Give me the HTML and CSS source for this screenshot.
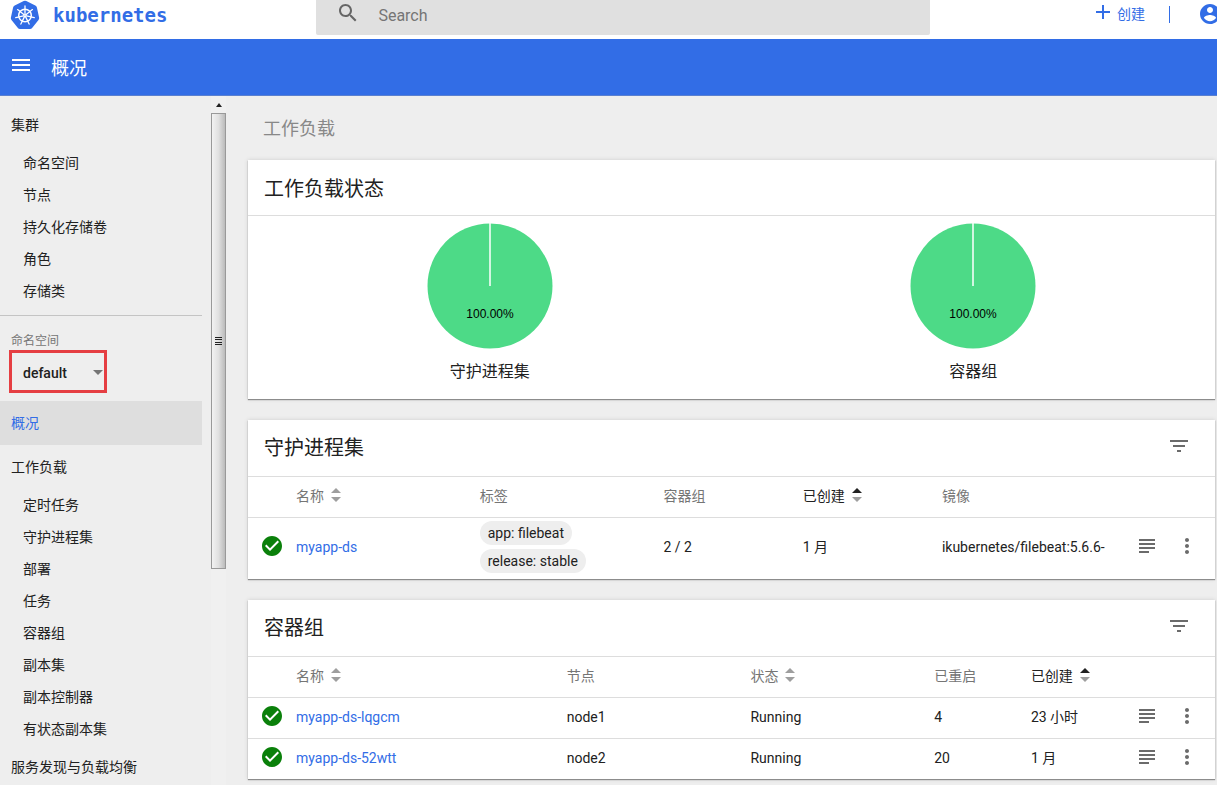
FILE: index.html
```html
<!DOCTYPE html>
<html lang="zh-CN">
<head>
<meta charset="utf-8">
<title>概况 - Kubernetes Dashboard</title>
<link rel="stylesheet" href="styles.css">
</head>
<body>
<svg class="symbols" aria-hidden="true">
  <symbol id="sort" viewBox="0 0 10 14"><path class="up" d="M0 5L5 0l5 5z"/><path d="M0 9h10l-5 5z"/></symbol>
  <symbol id="ok" viewBox="2 2 20 20"><path d="M12 2C6.48 2 2 6.48 2 12s4.48 10 10 10 10-4.48 10-10S17.52 2 12 2zm-2 15l-5-5 1.41-1.41L10 14.17l7.59-7.59L19 8l-9 9z"/></symbol>
  <symbol id="filter" viewBox="0 0 24 24"><path d="M10 18h4v-2h-4v2zM3 6v2h18V6H3zm3 7h12v-2H6v2z"/></symbol>
  <symbol id="logs" viewBox="0 0 24 24"><path d="M4 5h16v2H4zM4 9h16v2H4zM4 13h16v2H4zM4 17h10v2H4z"/></symbol>
  <symbol id="more" viewBox="0 0 24 24"><path d="M12 8c1.1 0 2-.9 2-2s-.9-2-2-2-2 .9-2 2 .9 2 2 2zm0 2c-1.1 0-2 .9-2 2s.9 2 2 2 2-.9 2-2-.9-2-2-2zm0 6c-1.1 0-2 .9-2 2s.9 2 2 2 2-.9 2-2-.9-2-2-2z"/></symbol>
</svg>
<div class="app">
  <header class="top">
    <a class="brand" href="#">
      <svg class="brand-mark" viewBox="0 0 30 30" aria-hidden="true">
        <path d="M13.700.6Q15 0 16.300.6L25.300 5Q26.500 5.600 26.900 7L29.100 17Q29.400 18.300 28.500 19.400L22.300 27.200Q21.400 28.400 20 28.400L10 28.400Q8.600 28.400 7.700 27.200L1.500 19.400Q.6 18.300.9 17L3.100 7Q3.500 5.600 4.700 5Z" transform="translate(0 .5)" fill="#326de6"/>
        <g fill="none" stroke="#fff" stroke-linecap="round">
          <circle cx="15" cy="15.500" r="6.300" stroke-width="1.500"/>
          <g stroke-width="1.300">
            <path id="spoke" d="M15 14V6"/>
            <use href="#spoke" transform="rotate(51.430 15 15.500)"/>
            <use href="#spoke" transform="rotate(102.860 15 15.500)"/>
            <use href="#spoke" transform="rotate(154.290 15 15.500)"/>
            <use href="#spoke" transform="rotate(205.710 15 15.500)"/>
            <use href="#spoke" transform="rotate(257.140 15 15.500)"/>
            <use href="#spoke" transform="rotate(308.570 15 15.500)"/>
          </g>
          <circle cx="15" cy="15.500" r="1" stroke-width="1.200"/>
        </g>
      </svg>
      <span>kubernetes</span>
    </a>
    <label class="search">
      <svg viewBox="0 0 24 24" aria-hidden="true"><path d="M15.500 14h-.79l-.28-.27C15.410 12.590 16 11.110 16 9.500 16 5.910 13.090 3 9.500 3S3 5.910 3 9.500 5.910 16 9.500 16c1.610 0 3.090-.59 4.230-1.570l.27.28v.79l5 4.990L20.490 19l-4.990-5zm-6 0C7.010 14 5 11.990 5 9.500S7.010 5 9.500 5 14 7.010 14 9.500 11.990 14 9.500 14z"/></svg>
      <input type="search" placeholder="Search" aria-label="Search">
    </label>
    <div class="actions">
      <button class="create" type="button"><svg viewBox="0 0 14 14" aria-hidden="true"><path d="M6 0h2v6h6v2H8v6H6V8H0V6h6z"/></svg>创建</button>
      <span class="bar"></span>
      <button class="user" type="button" aria-label="用户"><svg viewBox="2 2 20 20" aria-hidden="true"><path d="M12 2C6.480 2 2 6.480 2 12s4.480 10 10 10 10-4.480 10-10S17.520 2 12 2zm0 3c1.660 0 3 1.340 3 3s-1.340 3-3 3-3-1.340-3-3 1.340-3 3-3zm0 14.200c-2.500 0-4.710-1.280-6-3.220.03-1.990 4-3.080 6-3.080 1.990 0 5.970 1.090 6 3.080-1.290 1.940-3.500 3.220-6 3.220z"/></svg></button>
    </div>
  </header>
  <div class="toolbar">
    <button type="button" aria-label="菜单"><svg viewBox="0 0 18 12" aria-hidden="true"><path d="M0 0h18v2H0zM0 5h18v2H0zM0 10h18v2H0z"/></svg></button>
    <h1>概况</h1>
  </div>
  <div class="body">
    <aside class="side">
      <nav>
        <a class="group" href="#">集群</a>
        <a href="#">命名空间</a>
        <a href="#">节点</a>
        <a href="#">持久化存储卷</a>
        <a href="#">角色</a>
        <a href="#">存储类</a>
        <div class="ns">
          <label for="ns">命名空间</label>
          <div class="ns-box">
            <select id="ns"><option>default</option></select>
            <svg viewBox="0 0 10 5" aria-hidden="true"><path d="M0 0h10L5 5z"/></svg>
          </div>
        </div>
        <a class="group active" href="#">概况</a>
        <a class="group" href="#">工作负载</a>
        <a href="#">定时任务</a>
        <a href="#">守护进程集</a>
        <a href="#">部署</a>
        <a href="#">任务</a>
        <a href="#">容器组</a>
        <a href="#">副本集</a>
        <a href="#">副本控制器</a>
        <a href="#">有状态副本集</a>
        <a class="group" href="#">服务发现与负载均衡</a>
      </nav>
      <div class="scroll" aria-hidden="true">
        <div class="scroll-up"><svg viewBox="0 0 6 4"><path d="M0 4l3-4 3 4z"/></svg></div>
        <div class="thumb"><svg viewBox="0 0 7 8"><path d="M0 0h7v1H0zM0 2h7v1H0zM0 5h7v1H0zM0 7h7v1H0z"/></svg></div>
        <div class="rest"></div>
      </div>
    </aside>
    <main>
      <h2>工作负载</h2>
      <section class="card status">
        <header><h3>工作负载状态</h3></header>
        <div class="charts">
          <figure>
            <svg viewBox="0 0 126 126" role="img"><circle cx="63" cy="63" r="62.500" fill="#4dda87"/><path d="M63 0v63" stroke="#fff" stroke-width="1.500"/><text x="63" y="95" text-anchor="middle">100.00%</text></svg>
            <figcaption>守护进程集</figcaption>
          </figure>
          <figure>
            <svg viewBox="0 0 126 126" role="img"><circle cx="63" cy="63" r="62.500" fill="#4dda87"/><path d="M63 0v63" stroke="#fff" stroke-width="1.500"/><text x="63" y="95" text-anchor="middle">100.00%</text></svg>
            <figcaption>容器组</figcaption>
          </figure>
        </div>
      </section>
      <section class="card">
        <header><h3>守护进程集</h3><button class="icon" type="button" aria-label="筛选"><svg><use href="#filter"/></svg></button></header>
        <table>
          <colgroup><col class="c-status"><col class="c-19"><col class="c-19"><col class="c-14"><col class="c-14"><col><col class="c-menu"></colgroup>
          <thead><tr><th></th><th>名称<svg class="sort"><use href="#sort"/></svg></th><th>标签</th><th>容器组</th><th class="sorted">已创建<svg class="sort asc"><use href="#sort"/></svg></th><th>镜像</th><th></th></tr></thead>
          <tbody>
            <tr class="tall"><td class="st"><svg><use href="#ok"/></svg></td><td><a href="#">myapp-ds</a></td><td><div class="chips"><span>app: filebeat</span><span>release: stable</span></div></td><td>2 / 2</td><td>1 月</td><td>ikubernetes/filebeat:5.6.6-</td>
            <td><div class="menu"><button class="icon" type="button" aria-label="日志"><svg><use href="#logs"/></svg></button><button class="icon" type="button" aria-label="更多"><svg><use href="#more"/></svg></button></div></td></tr>
          </tbody>
        </table>
      </section>
      <section class="card">
        <header><h3>容器组</h3><button class="icon" type="button" aria-label="筛选"><svg><use href="#filter"/></svg></button></header>
        <table>
          <colgroup><col class="c-status"><col class="c-28"><col class="c-19"><col class="c-19"><col class="c-10"><col><col class="c-menu"></colgroup>
          <thead><tr><th></th><th>名称<svg class="sort"><use href="#sort"/></svg></th><th>节点</th><th>状态<svg class="sort"><use href="#sort"/></svg></th><th>已重启</th><th class="sorted">已创建<svg class="sort asc"><use href="#sort"/></svg></th><th></th></tr></thead>
          <tbody>
            <tr><td class="st"><svg><use href="#ok"/></svg></td><td><a href="#">myapp-ds-lqgcm</a></td><td>node1</td><td>Running</td><td>4</td><td>23 小时</td>
            <td><div class="menu"><button class="icon" type="button" aria-label="日志"><svg><use href="#logs"/></svg></button><button class="icon" type="button" aria-label="更多"><svg><use href="#more"/></svg></button></div></td></tr>
            <tr><td class="st"><svg><use href="#ok"/></svg></td><td><a href="#">myapp-ds-52wtt</a></td><td>node2</td><td>Running</td><td>20</td><td>1 月</td>
            <td><div class="menu"><button class="icon" type="button" aria-label="日志"><svg><use href="#logs"/></svg></button><button class="icon" type="button" aria-label="更多"><svg><use href="#more"/></svg></button></div></td></tr>
          </tbody>
        </table>
      </section>
    </main>
  </div>
</div>
</body>
</html>
```
FILE: styles.css
```css
* { box-sizing: border-box; }
body {
  margin: 0;
  font: 14px/20px Roboto, "Noto Sans CJK SC", sans-serif;
  color: #212121;
  background: #eee;
}
a { color: #326de6; text-decoration: none; }
button { padding: 0; border: 0; background: none; font: inherit; color: inherit; cursor: pointer; }
svg { display: block; fill: currentColor; }
h1, h2, h3, figure { margin: 0; font-weight: 400; }
.symbols { position: absolute; width: 0; height: 0; }
.app { display: flex; flex-direction: column; height: 100vh; overflow: hidden; }

.top { display: flex; flex: none; height: 39px; background: #fff; overflow: hidden; }
.brand {
  display: flex; align-items: center; gap: 13px;
  width: 26%; height: 30px; padding-left: 10px;
  font: bold 19px/24px "DejaVu Sans Mono", monospace;
}
.brand-mark { width: 30px; height: 30px; }
.search {
  display: flex; align-items: center; gap: 18px;
  flex: 1; height: 35px; padding: 0 20px 4px;
  background: #e0e0e0; color: #666; border-radius: 0 0 2px 2px;
}
.search svg { width: 24px; height: 24px; margin-bottom: 6px; }
.search input { flex: 1; padding: 0; border: 0; outline: 0; background: none; font: inherit; font-size: 16px; color: #333; }
.search input::placeholder { color: #757575; opacity: 1; }
.actions {
  display: flex; align-items: center; gap: 24px;
  width: 287px; height: 28px; padding-left: 166px; color: #326de6;
}
.create { display: flex; align-items: center; gap: 7px; flex: none; }
.create svg { width: 14px; height: 14px; margin-bottom: 4px; }
.bar { flex: none; width: 1px; height: 17px; background: #326de6; }
.user { flex: none; margin-left: 6px; }
.user svg { width: 20px; height: 20px; }

.toolbar {
  display: flex; align-items: center; gap: 21px; flex: none;
  height: 57px; padding-left: 12px;
  background: #326de6; color: #fff; border-bottom: 1px solid #5a80d0;
}
.toolbar svg { width: 18px; height: 12px; margin-bottom: 4px; }
.toolbar h1 { padding-top: 4px; font-size: 18px; line-height: 24px; }

.body { display: flex; flex: 1; min-height: 0; }
.side { display: flex; flex: none; gap: 9px; width: 227px; }
.side nav { width: 202px; padding-top: 7px; overflow: hidden; }
.side nav a { display: block; padding-left: 23px; line-height: 32px; color: #212121; }
.side nav .group { padding-left: 11px; line-height: 44px; }
.side nav .active { background: #dedede; color: #326de6; }
.ns { margin: 8px 0; padding: 14px 0 0 9px; border-top: 1px solid #c4c4c4; }
.ns label { display: block; padding: 2px 0 0 2px; font-size: 12px; line-height: 18px; color: #757575; }
.ns-box { display: flex; align-items: center; width: 98px; height: 43px; padding-top: 2px; border: 3px solid #e53e42; }
.ns select {
  flex: 1; min-width: 0; height: 35px; padding: 0 0 0 11px;
  appearance: none; border: 0; background: none;
  font: inherit; font-weight: 500; color: #212121;
}
.ns svg { width: 10px; height: 5px; margin-right: 1px; color: #757575; }
.scroll { display: flex; flex-direction: column; width: 15px; background: #f0f0f0; }
.scroll-up { display: flex; align-items: center; justify-content: center; height: 17px; }
.scroll-up svg { width: 6px; height: 4px; }
.thumb {
  display: flex; align-items: center; justify-content: center; flex: 455;
  border: 1px solid #999; background: linear-gradient(90deg, #f2f2f2, #e0e0e0 50%, #bbb);
}
.thumb svg { width: 7px; height: 8px; }
.rest { flex: 217; }

main { flex: 1; min-width: 0; padding: 0 2px 0 21px; overflow: hidden; }
main h2 { padding: 21px 0 19px 15px; font-size: 18px; line-height: 24px; color: #888; }
.card { margin-bottom: 21px; background: #fff; box-shadow: 0 1px 1px #8c8c8c, 0 0 4px #ccc; }
.card header { display: flex; align-items: center; justify-content: space-between; height: 56px; padding: 0 24px 0 16px; }
.card.status header { height: 55px; padding-top: 2px; }
.card h3 { font-size: 20px; line-height: 24px; }
.icon { color: #6b6b6b; }
.icon svg { width: 24px; height: 24px; }
.card header .icon { padding-bottom: 4px; }
.charts { display: grid; grid-template-columns: 1fr 1fr; border-top: 1px solid #ddd; padding: 7px 0 15px; }
figure { display: flex; flex-direction: column; align-items: center; gap: 11px; }
figure svg { width: 126px; height: 126px; }
figure text { font: 12px "Liberation Sans", sans-serif; fill: #000; }
figcaption { font-size: 16px; line-height: 24px; }

table { width: 100%; table-layout: fixed; border-collapse: collapse; }
.c-status { width: 48px; }
.c-10 { width: 10%; }
.c-14 { width: 14.4%; }
.c-19 { width: 19%; }
.c-28 { width: 28%; }
.c-menu { width: 80px; }
th, td { height: 41px; padding: 0 0 2px; border-top: 1px solid #ddd; text-align: left; font-weight: 400; white-space: nowrap; }
th { color: #757575; }
th.sorted { color: #212121; }
.tall td { height: 61px; }
.sort { display: inline-block; width: 10px; height: 14px; margin-left: 7px; vertical-align: -1px; color: #9e9e9e; }
.up { fill: var(--up, currentColor); }
.asc { --up: #212121; }
.st, td:last-child { padding-bottom: 4px; }
.st svg { width: 20px; height: 20px; margin: 0 auto; color: #0a800a; }
.chips { display: flex; flex-direction: column; align-items: flex-start; gap: 4px; }
.chips span { padding: 0 8px; border-radius: 12px; line-height: 24px; background: #eee; }
.menu { display: flex; gap: 16px; }
```
